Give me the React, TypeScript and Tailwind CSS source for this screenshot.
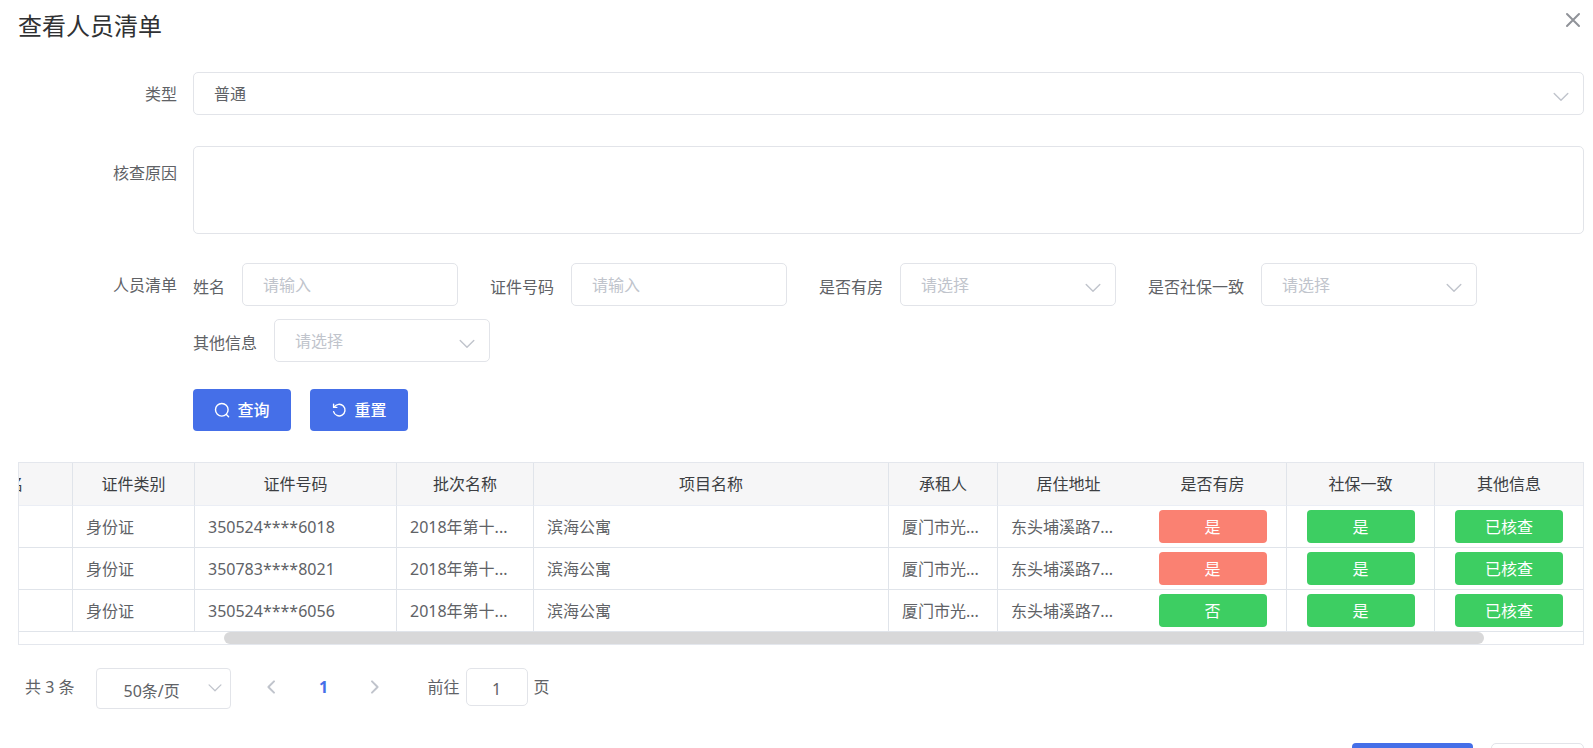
import React from 'react';

type SelectProps = {
  id: string;
  text: string;
  className?: string;
  filled?: boolean;
};

type Person = {
  certType: string;
  certNo: string;
  batch: string;
  project: string;
  tenant: string;
  address: string;
  hasHouse: string;
  social: string;
  other: string;
};

const people: Person[] = [
  {
    certType: '身份证',
    certNo: '350524****6018',
    batch: '2018年第十...',
    project: '滨海公寓',
    tenant: '厦门市光...',
    address: '东头埔溪路7...',
    hasHouse: '是',
    social: '是',
    other: '已核查',
  },
  {
    certType: '身份证',
    certNo: '350783****8021',
    batch: '2018年第十...',
    project: '滨海公寓',
    tenant: '厦门市光...',
    address: '东头埔溪路7...',
    hasHouse: '是',
    social: '是',
    other: '已核查',
  },
  {
    certType: '身份证',
    certNo: '350524****6056',
    batch: '2018年第十...',
    project: '滨海公寓',
    tenant: '厦门市光...',
    address: '东头埔溪路7...',
    hasHouse: '否',
    social: '是',
    other: '已核查',
  },
];

const Chevron: React.FC<{ className: string }> = ({ className }) => (
  <svg
    viewBox="0 0 16 16"
    className={`pointer-events-none absolute text-[#c0c4cc] ${className}`}
    fill="none"
    stroke="currentColor"
    strokeWidth="1.4"
    strokeLinecap="round"
    strokeLinejoin="round"
  >
    <path d="M1.2 4.4 8 11.2l6.8-6.8" />
  </svg>
);

const Select: React.FC<SelectProps> = ({ id, text, className = 'w-[216px]', filled }) => (
  <div className={`relative ${className}`}>
    <select
      id={id}
      className={`block h-[43px] w-full appearance-none rounded-[5px] border border-[#e2e4e9] bg-white px-5 ${
        filled ? 'text-[#606266]' : 'text-[#c0c4cc]'
      }`}
    >
      <option>{text}</option>
    </select>
    <Chevron className="right-[15px] top-[17px] h-4 w-4" />
  </div>
);

const TextInput: React.FC<{ id: string }> = ({ id }) => (
  <input
    id={id}
    type="text"
    placeholder="请输入"
    className="block h-[43px] w-[216px] rounded-[5px] border border-[#e2e4e9] bg-white px-5 placeholder:text-[#c0c4cc]"
  />
);

const Field: React.FC<{ id: string; label: string; children: React.ReactNode }> = ({
  id,
  label,
  children,
}) => (
  <div className="flex items-start gap-[17px]">
    <label htmlFor={id} className="pt-3">
      {label}
    </label>
    {children}
  </div>
);

const StatusButton: React.FC<{ text: string; red?: boolean }> = ({ text, red }) => (
  <button
    type="button"
    className={`mx-auto block h-[33px] w-[108px] rounded-[4px] text-white ${
      red ? 'bg-[#fa8172]' : 'bg-[#3dce62]'
    }`}
  >
    {text}
  </button>
);

const App: React.FC = () => {
  const th = 'border-b border-[#ebeef5] p-0 text-center font-normal';
  const td = 'border-b border-r border-[#e0e4ea] px-[13px] py-0 whitespace-nowrap';
  const line = 'border-r border-r-[#e0e4ea]';
  return (
    <div className="h-screen overflow-hidden bg-white font-['Noto_Sans','Noto_Sans_CJK_SC',sans-serif] text-[16px] leading-6 text-[#606266]">
      <header className="flex items-start justify-between pl-[18px] pr-3 pt-2">
        <h1 className="text-2xl leading-9 text-[#303133]">查看人员清单</h1>
        <button type="button" aria-label="关闭" className="pt-1 text-[#909399]">
          <svg viewBox="0 0 16 16" className="h-4 w-4" stroke="currentColor" strokeWidth="2" strokeLinecap="round">
            <path d="M2 2l12 12M14 2 2 14" />
          </svg>
        </button>
      </header>

      <main className="pr-[9px] pt-7">
        <div className="flex gap-4">
          <label htmlFor="type" className="w-[177px] shrink-0 pt-[10px] text-right">
            类型
          </label>
          <Select id="type" text="普通" className="flex-1" filled />
        </div>

        <div className="mt-[31px] flex gap-4">
          <label htmlFor="reason" className="w-[177px] shrink-0 pt-[15px] text-right">
            核查原因
          </label>
          <textarea
            id="reason"
            className="block h-[88px] flex-1 resize-none rounded-[5px] border border-[#e2e4e9] bg-white px-5 py-2"
          />
        </div>

        <div className="mt-[29px] flex gap-4">
          <div className="w-[177px] shrink-0 pt-[10px] text-right">人员清单</div>
          <form className="flex-1">
            <div className="flex flex-wrap gap-x-8 gap-y-[13px]">
              <Field id="name" label="姓名">
                <TextInput id="name" />
              </Field>
              <Field id="certNo" label="证件号码">
                <TextInput id="certNo" />
              </Field>
              <Field id="hasHouse" label="是否有房">
                <Select id="hasHouse" text="请选择" />
              </Field>
              <Field id="social" label="是否社保一致">
                <Select id="social" text="请选择" />
              </Field>
              <Field id="other" label="其他信息">
                <Select id="other" text="请选择" />
              </Field>
            </div>
            <div className="mt-[27px] flex gap-[19px]">
              <button
                type="button"
                className="flex h-[42px] w-[98px] items-center justify-center gap-[7px] rounded-[4px] bg-[#456fe8] font-medium text-white"
              >
                <svg viewBox="0 0 16 16" className="h-4 w-4" fill="none" stroke="currentColor" strokeWidth="1.4" strokeLinecap="round">
                  <circle cx="7.8" cy="7.8" r="6.3" />
                  <path d="M12.4 12.6l2.2 2.1" />
                </svg>
                查询
              </button>
              <button
                type="button"
                className="flex h-[42px] w-[98px] items-center justify-center gap-[7px] rounded-[4px] bg-[#456fe8] font-medium text-white"
              >
                <svg viewBox="0 0 16 16" className="h-4 w-4" fill="none" stroke="currentColor" strokeWidth="1.4" strokeLinecap="round" strokeLinejoin="round">
                  <path d="M2.6 2.2v3.2h3.2" />
                  <path d="M3.2 5.2A5.8 5.8 0 1 1 2.6 9.6" />
                </svg>
                重置
              </button>
            </div>
          </form>
        </div>

        <div className="ml-[18px] mt-[31px] overflow-hidden border border-[#e4e7ed]">
          {/* scrolled to the right, so the first column is partly cut off */}
          <table className="-ml-[76px] w-[calc(100%+76px)] table-fixed border-separate border-spacing-0">
            <colgroup>
              <col className="w-[130px]" />
              <col className="w-[122px]" />
              <col className="w-[202px]" />
              <col className="w-[137px]" />
              <col />
              <col className="w-[109px]" />
              <col className="w-[141px]" />
              <col className="w-[148px]" />
              <col className="w-[148px]" />
              <col className="w-[148px]" />
            </colgroup>
            <thead>
              <tr className="h-[43px] bg-[#f6f6f7] text-[#3c3e42]">
                <th className={`${th} ${line}`}>姓名</th>
                <th className={`${th} ${line}`}>证件类别</th>
                <th className={`${th} ${line}`}>证件号码</th>
                <th className={`${th} ${line}`}>批次名称</th>
                <th className={`${th} ${line}`}>项目名称</th>
                <th className={`${th} ${line}`}>承租人</th>
                <th className={th}>居住地址</th>
                <th className={`${th} ${line}`}>是否有房</th>
                <th className={`${th} ${line}`}>社保一致</th>
                <th className={th}>其他信息</th>
              </tr>
            </thead>
            <tbody>
              {people.map((p, i) => (
                <tr key={i} className="h-[42px]">
                  <td className={td}></td>
                  <td className={td}>{p.certType}</td>
                  <td className={td}>{p.certNo}</td>
                  <td className={td}>{p.batch}</td>
                  <td className={td}>{p.project}</td>
                  <td className={td}>{p.tenant}</td>
                  <td className="whitespace-nowrap border-b border-[#e0e4ea] px-[13px] py-0">{p.address}</td>
                  <td className={td}>
                    <StatusButton text={p.hasHouse} red={p.hasHouse === '是'} />
                  </td>
                  <td className={td}>
                    <StatusButton text={p.social} />
                  </td>
                  <td className="border-b border-[#e0e4ea] px-[13px] py-0">
                    <StatusButton text={p.other} />
                  </td>
                </tr>
              ))}
            </tbody>
          </table>
          <div className="h-3">
            <div className="ml-[13.1%] h-3 w-[80.6%] rounded-full bg-[#d8d8d9]" />
          </div>
        </div>

        <div className="mt-[23px] flex items-start pl-[25px]">
          <span className="pt-[7px]">共 3 条</span>
          <div className="relative ml-[22px] w-[135px]">
            <select
              aria-label="每页条数"
              className="block h-[41px] w-full appearance-none rounded-[4px] border border-[#e2e4e9] bg-white px-[26px] pt-1"
            >
              <option>50条/页</option>
            </select>
            <Chevron className="right-[9px] top-[13px] h-3.5 w-3.5" />
          </div>
          <button type="button" aria-label="上一页" className="ml-8 pt-[11px] text-[#c0c4cc]">
            <svg viewBox="0 0 16 16" className="h-4 w-4" fill="none" stroke="currentColor" strokeWidth="2" strokeLinecap="round" strokeLinejoin="round">
              <path d="M11 2.4 5.4 8l5.6 5.6" />
            </svg>
          </button>
          <button type="button" className="ml-8 w-6 pt-[7px] font-bold text-[#456fe8]">
            1
          </button>
          <button type="button" aria-label="下一页" className="ml-8 pt-[11px] text-[#c0c4cc]">
            <svg viewBox="0 0 16 16" className="h-4 w-4" fill="none" stroke="currentColor" strokeWidth="2" strokeLinecap="round" strokeLinejoin="round">
              <path d="M5 2.4 10.6 8 5 13.6" />
            </svg>
          </button>
          <label htmlFor="page" className="ml-11 pt-[7px]">
            前往
          </label>
          <input
            id="page"
            type="text"
            defaultValue="1"
            className="ml-1.5 h-[38px] w-[62px] rounded-[5px] border border-[#e2e4e9] bg-white pt-1 text-center"
          />
          <label htmlFor="page" className="ml-1.5 pt-[7px]">
            页
          </label>
        </div>
      </main>

      <footer className="mt-[34px] flex justify-end gap-[18px] pr-[9px]">
        <button type="button" aria-label="确定" className="h-[42px] w-[121px] rounded-[4px] bg-[#456fe8]" />
        <button type="button" aria-label="取消" className="h-[42px] w-[93px] rounded-[5px] border border-[#e2e4e9] bg-white" />
      </footer>
    </div>
  );
};

export default App;
